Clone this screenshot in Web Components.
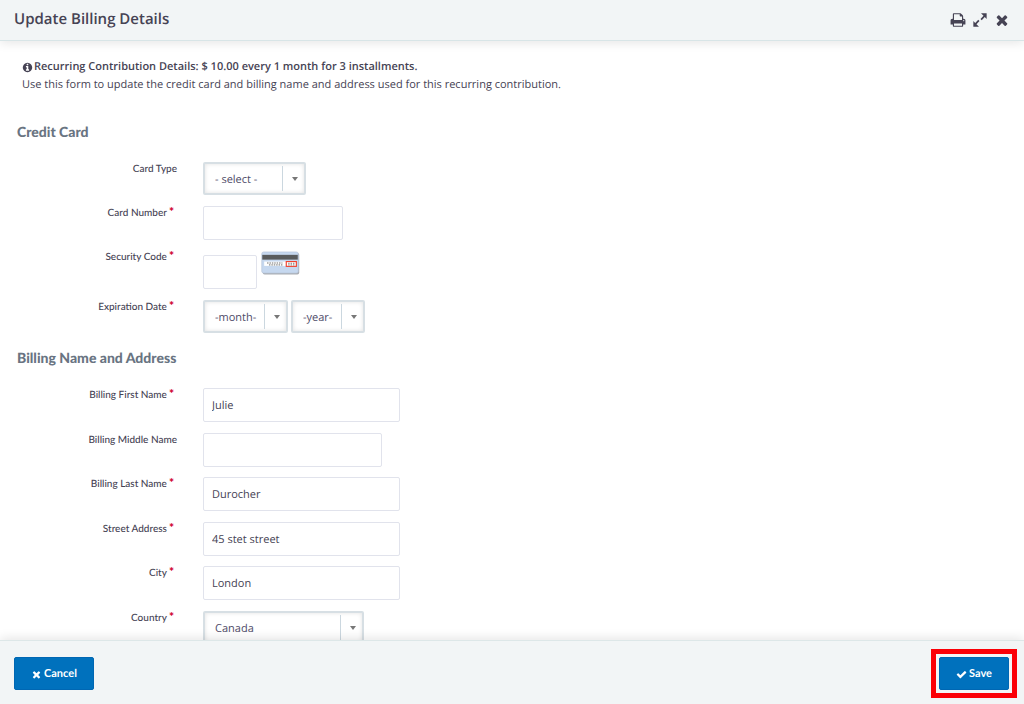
<!DOCTYPE html>
<html lang="en">
<head>
    <meta charset="UTF-8">
    <meta name="viewport" content="width=device-width, initial-scale=1.0">
    <title>Update Billing Details</title>
    <style>
      body {
        margin: 0;
        font-family: "Open Sans", "Liberation Sans", sans-serif;
        font-size: 11px;
        text-rendering: geometricPrecision;
        color: #464354;
        background: #fff;
      }
    </style>
</head>
<body>
    <template id="billing-dialog-template">
      <style>
        :host {
          display: flex;
          flex-direction: column;
          height: 100vh;
          overflow: hidden;
        }

        header, footer {
          flex: none;
          display: flex;
          align-items: center;
          justify-content: space-between;
          background: #f2f5f6;
          z-index: 1;
        }

        header {
          box-sizing: border-box;
          height: 41px;
          padding: 0 14px 2px;
          border-bottom: 1px solid #d8e5e7;
          box-shadow: 0 2px 10px rgba(0, 0, 0, .1);
        }

        h1 {
          margin: 0;
          padding-bottom: 1px;
          font-size: 15px;
          line-height: 20px;
          font-weight: 600;
        }

        .tools {
          display: flex;
          gap: 6px;
          padding-top: 1px;
        }

        .tools button {
          display: flex;
          padding: 0;
          border: 0;
          background: none;
          color: inherit;
        }

        main {
          flex: 1;
          min-height: 0;
          overflow: hidden;
        }

        footer {
          padding: 16px 15px 14px 14px;
          border-top: 1px solid #dde7e8;
          box-shadow: 0 -2px 10px rgba(0, 0, 0, .1);
        }
      </style>
      <header>
        <h1></h1>
        <div class="tools">
          <button type="button" aria-label="Print"><fa-icon name="print" size="16"></fa-icon></button>
          <button type="button" aria-label="Resize"><fa-icon name="expand" size="16"></fa-icon></button>
          <button type="button" aria-label="Close"><fa-icon name="times" size="16"></fa-icon></button>
        </div>
      </header>
      <main><slot></slot></main>
      <footer><slot name="buttons"></slot></footer>
    </template>

    <template id="help-text-template">
      <style>
        :host {
          display: block;
          padding: 17px 22px 0;
          line-height: 18px;
        }

        .title {
          display: flex;
          align-items: center;
          gap: 1px;
          font-weight: 600;
        }
      </style>
      <div class="title"><fa-icon name="info" size="11"></fa-icon><slot name="title"></slot></div>
      <slot></slot>
    </template>

    <template id="field-group-template">
      <style>
        :host {
          display: block;
        }

        fieldset {
          margin: 0;
          padding: 0;
          border: 0;
        }

        legend {
          padding: 0 17px;
          margin-bottom: 20px;
          font-family: Lato, sans-serif;
          font-size: 14px;
          line-height: 20px;
          font-weight: 900;
          color: #697482;
        }
      </style>
      <fieldset>
        <legend></legend>
        <slot></slot>
      </fieldset>
    </template>

    <template id="form-field-template">
      <style>
        :host {
          display: grid;
          grid-template-columns: 177px 1fr;
          column-gap: 26px;
          align-items: start;
          margin-bottom: 10px;
        }

        :host(.wide) {
          margin-bottom: 11px;
        }

        label {
          text-align: right;
          font-family: Lato, sans-serif;
          font-size: 10px;
          line-height: 15px;
          font-weight: 500;
        }

        .required {
          margin: 0 3px 0 2px;
          font-size: 12px;
          line-height: 10px;
          font-weight: 900;
          color: #cf0030;
        }

        .controls {
          display: flex;
          align-items: flex-start;
          gap: 3px;
          min-height: 34px;
        }

        input {
          box-sizing: border-box;
          height: 34px;
          padding: 0 8px;
          border: 1px solid #e1e3ec;
          border-radius: 2px;
          font: inherit;
          text-rendering: inherit;
          color: inherit;
          background: #fff;
        }

        :host([lowered]) input {
          margin-top: 5px;
        }

        :host([lowered]) .controls {
          min-height: 40px;
        }

        .select {
          display: grid;
          grid-template-columns: 1fr 24px;
          align-items: center;
        }

        select {
          grid-area: 1 / 1 / 2 / 3;
          appearance: none;
          width: 100%;
          height: 33px;
          padding: 1px 10px 0;
          border: 2px solid #d7dfe4;
          border-radius: 2px;
          box-shadow: inset 0 0 4px rgba(0, 0, 0, .12);
          font: inherit;
          text-rendering: inherit;
          color: #4e4b68;
          background: #fff;
        }

        .arrow {
          grid-area: 1 / 2;
          display: flex;
          align-items: center;
          justify-content: center;
          height: 25px;
          border-left: 1px solid #cbd7df;
          pointer-events: none;
        }

        .arrow::before {
          content: "";
          border: 3px solid transparent;
          border-top: 4px solid #777;
          border-bottom: 0;
        }
      </style>
      <label for="control"></label>
      <div class="controls"><slot></slot></div>
    </template>

    <template id="action-button-template">
      <style>
        :host {
          display: block;
        }

        :host([highlight]) {
          outline: 5px solid #fb0007;
          outline-offset: 3px;
        }

        button {
          display: flex;
          align-items: center;
          justify-content: center;
          gap: 2px;
          height: 33px;
          padding: 1px 16px 0;
          border: 1px solid #0067b3;
          border-radius: 2px;
          background: #0071bd;
          color: #fff;
          font: 700 11px/16px Lato, sans-serif;
          text-rendering: inherit;
        }
      </style>
      <button type="button"><fa-icon size="11"></fa-icon><slot></slot></button>
    </template>

    <template id="cvv-picture-template">
      <style>
        :host {
          display: block;
          margin: 1px 1px 0;
        }

        svg {
          display: block;
        }
      </style>
      <svg width="39" height="24" viewBox="0 0 40 25" role="img" aria-label="Security code on the back of the card">
        <rect x="1.500" y="2" width="38" height="22.500" rx="2" fill="#a9adb3"/>
        <rect x=".5" y="1" width="38" height="22" rx="2" fill="#c6d8ef" stroke="#b6c4d8" stroke-width=".7"/>
        <rect x="1" y="4" width="37" height="5" fill="#595b5c"/>
        <rect x="3" y="11" width="23" height="4.500" fill="#fff"/>
        <path d="M6 12.500h16M8 14.500h14" stroke="#666" stroke-width="1" stroke-dasharray="1.500 1"/>
        <rect x="26" y="11" width="10.500" height="5" fill="#fff" stroke="#f0422e" stroke-width="1.200"/>
        <path d="M28 12.800h7M28 14.500h7" stroke="#777" stroke-width="1" stroke-dasharray="1.500 1"/>
      </svg>
    </template>

    <billing-dialog heading="Update Billing Details">
      <help-text>
        <span slot="title">Recurring Contribution Details: $ 10.00 every 1 month for 3 installments.</span>
        Use this form to update the credit card and billing name and address used for this recurring contribution.
      </help-text>

      <field-group legend="Credit Card" style="margin-top: 28px">
        <form-field label="Card Type" options="- select -" widths="103"></form-field>
        <form-field label="Card Number" required width="140"></form-field>
        <form-field label="Security Code" required width="54" lowered><cvv-picture></cvv-picture></form-field>
        <form-field label="Expiration Date" required options="-month-,-year-" widths="85,74"></form-field>
      </field-group>

      <field-group legend="Billing Name and Address" style="margin-top: 4px">
        <form-field class="wide" label="Billing First Name" required width="197" value="Julie"></form-field>
        <form-field label="Billing Middle Name" width="179"></form-field>
        <form-field class="wide" label="Billing Last Name" required width="197" value="Durocher"></form-field>
        <form-field label="Street Address" required width="197" value="45 stet street"></form-field>
        <form-field class="wide" label="City" required width="197" value="London"></form-field>
        <form-field label="Country" required options="Canada" widths="161"></form-field>
      </field-group>

      <action-button slot="buttons" icon="times">Cancel</action-button>
      <action-button slot="buttons" icon="check" highlight>Save</action-button>
    </billing-dialog>

    <script>
      const icons = {
        print: 'M448 1536h896v-256h-896v256zm0-640h896v-384h-160q-40 0-68-28t-28-68v-160h-640v640zm1152 64q0-26-19-45t-45-19-45 19-19 45 19 45 45 19 45-19 19-45zm128 0v416q0 13-9.5 22.5t-22.5 9.5h-224v160q0 40-28 68t-68 28h-960q-40 0-68-28t-28-68v-160h-224q-13 0-22.5-9.5t-9.5-22.5v-416q0-79 56.5-135.5t135.5-56.5h64v-544q0-40 28-68t68-28h672q40 0 88 20t76 48l152 152q28 28 48 76t20 88v256h64q79 0 135.5 56.5t56.5 135.5z',
        expand: 'M1010 150h630v630l-210-210-340 340-140-140 340-340zM780 1640h-630v-630l210 210 340-340 140 140-340 340z',
        times: 'M1490 1322q0 40-28 68l-136 136q-28 28-68 28t-68-28l-294-294-294 294q-28 28-68 28t-68-28l-136-136q-28-28-28-68t28-68l294-294-294-294q-28-28-28-68t28-68l136-136q28-28 68-28t68 28l294 294 294-294q28-28 68-28t68 28l136 136q28 28 28 68t-28 68l-294 294 294 294q28 28 28 68z',
        check: 'M1671 566q0 40-28 68l-724 724-136 136q-28 28-68 28t-68-28l-136-136-362-362q-28-28-28-68t28-68l136-136q28-28 68-28t68 28l294 295 656-657q28-28 68-28t68 28l136 136q28 28 28 68z',
        info: 'M1152 1376v-160q0-14-9-23t-23-9h-96v-512q0-14-9-23t-23-9h-320q-14 0-23 9t-9 23v160q0 14 9 23t23 9h96v320h-96q-14 0-23 9t-9 23v160q0 14 9 23t23 9h448q14 0 23-9t9-23zm-128-896v-160q0-14-9-23t-23-9h-192q-14 0-23 9t-9 23v160q0 14 9 23t23 9h192q14 0 23-9t9-23zm640 416q0 209-103 385.5t-279.5 279.5-385.5 103-385.5-103-279.5-279.5-103-385.5 103-385.5 279.5-279.5 385.5-103 385.5 103 279.5 279.5 103 385.5z'
      };

      class TemplateElement extends HTMLElement {
        connectedCallback() {
          if (this.shadowRoot) return;
          const template = document.getElementById(this.localName + '-template').content;
          this.attachShadow({ mode: 'open' }).appendChild(template.cloneNode(true));
          this.setup();
        }

        setup() {}
      }

      class FaIcon extends HTMLElement {
        connectedCallback() {
          if (this.shadowRoot) return;
          const size = this.getAttribute('size');
          this.attachShadow({ mode: 'open' }).innerHTML = `
            <style>:host { display: block; } svg { display: block; }</style>
            <svg width="${size}" height="${size}" viewBox="0 0 1792 1792" fill="currentColor" aria-hidden="true"><path d="${icons[this.getAttribute('name')]}"/></svg>`;
        }
      }

      class BillingDialog extends TemplateElement {
        setup() {
          this.shadowRoot.querySelector('h1').textContent = this.getAttribute('heading');
        }
      }

      class FieldGroup extends TemplateElement {
        setup() {
          this.shadowRoot.querySelector('legend').textContent = this.getAttribute('legend');
        }
      }

      class FormField extends TemplateElement {
        setup() {
          const label = this.shadowRoot.querySelector('label');
          label.textContent = this.getAttribute('label');
          if (this.hasAttribute('required')) {
            const star = document.createElement('span');
            star.className = 'required';
            star.textContent = '*';
            label.append(star);
          }

          const controls = this.shadowRoot.querySelector('.controls');
          if (this.hasAttribute('options')) {
            const widths = this.getAttribute('widths').split(',');
            this.getAttribute('options').split(',').forEach((text, i) => {
              controls.append(this.createSelect(text, widths[i], i));
            });
          } else {
            const input = document.createElement('input');
            input.id = 'control';
            input.type = 'text';
            input.value = this.getAttribute('value') || '';
            input.style.width = this.getAttribute('width') + 'px';
            controls.prepend(input);
          }
        }

        createSelect(text, width, index) {
          const box = document.createElement('div');
          box.className = 'select';
          box.style.width = width + 'px';
          box.innerHTML = '<select></select><span class="arrow"></span>';
          const select = box.firstChild;
          select.add(new Option(text));
          if (index === 0) {
            select.id = 'control';
          } else {
            select.setAttribute('aria-label', this.getAttribute('label') + ' ' + text);
          }
          return box;
        }
      }

      // fa-icon is defined last, so the icon name is in place before it draws
      class ActionButton extends TemplateElement {
        setup() {
          this.shadowRoot.querySelector('fa-icon').setAttribute('name', this.getAttribute('icon'));
        }
      }

      customElements.define('billing-dialog', BillingDialog);
      customElements.define('help-text', class extends TemplateElement {});
      customElements.define('field-group', FieldGroup);
      customElements.define('form-field', FormField);
      customElements.define('action-button', ActionButton);
      customElements.define('cvv-picture', class extends TemplateElement {});
      customElements.define('fa-icon', FaIcon);
    </script>
</body>
</html>
